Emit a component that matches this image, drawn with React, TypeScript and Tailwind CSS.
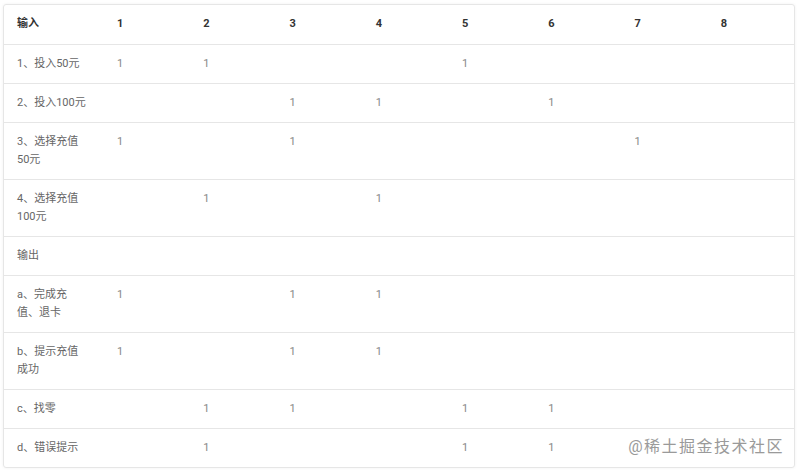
const cols = ["1", "2", "3", "4", "5", "6", "7", "8"]

const rows: { label: string; marks: number[] }[] = [
  { label: "1、投入50元", marks: [1, 2, 5] },
  { label: "2、投入100元", marks: [3, 4, 6] },
  { label: "3、选择充值50元", marks: [1, 3, 7] },
  { label: "4、选择充值100元", marks: [2, 4] },
  { label: "输出", marks: [] },
  { label: "a、完成充值、退卡", marks: [1, 3, 4] },
  { label: "b、提示充值成功", marks: [1, 3, 4] },
  { label: "c、找零", marks: [2, 3, 5, 6] },
  { label: "d、错误提示", marks: [2, 5, 6] },
]

export default function App() {
  return (
    <div
      className="relative w-[800px] h-[472px] bg-white pt-[4px] pl-[3px]"
      style={{ fontFamily: '"Roboto", "Noto Sans CJK SC", sans-serif' }}
    >
      <div className="w-[792px] border border-[#e6e6e6] rounded-[3px] shadow-[0_0_3px_rgba(0,0,0,0.06)] overflow-hidden">
        <table className="w-full border-collapse table-fixed text-[11px] leading-[18px]">
          <colgroup>
            <col className="w-[100px]" />
            {cols.map((c) => (
              <col key={c} />
            ))}
          </colgroup>
          <thead>
            <tr className="h-[39px] border-b border-[#e6e6e6]">
              <th className="pl-[13px] text-left font-bold text-[#333]">输入</th>
              {cols.map((c) => (
                <th key={c} className="pl-[13px] text-left font-bold text-[#333]">
                  {c}
                </th>
              ))}
            </tr>
          </thead>
          <tbody>
            {rows.map((r, i) => (
              <tr key={i} className={i < rows.length - 1 ? "border-b border-[#e6e6e6]" : ""}>
                <td className="pl-[13px] pr-[16px] py-[10px] align-top text-[#666]">{r.label}</td>
                {cols.map((c, j) => (
                  <td key={c} className="pl-[13px] py-[10px] align-top text-[#888]">
                    {r.marks.includes(j + 1) ? "1" : ""}
                  </td>
                ))}
              </tr>
            ))}
          </tbody>
        </table>
      </div>
      <div className="absolute right-[16px] bottom-[15px] text-[16px] leading-[20px] text-[#9a9a9a] tracking-[1.5px]">
        @稀土掘金技术社区
      </div>
    </div>
  )
}
